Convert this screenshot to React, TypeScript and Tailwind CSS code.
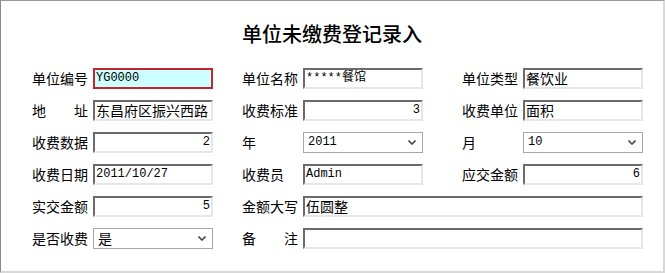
// 单位未缴费登记录入 — 旧式 WinForms 风格录入表单
const CJK = "font-['Noto_Sans_CJK_SC',sans-serif]";
const MONO = "font-['Liberation_Mono','Noto_Sans_CJK_SC',monospace]";

function Label({ text, spread }: { text: string; spread?: boolean }) {
  if (spread) {
    const [a, b] = [...text];
    return (
      <div className={`w-[56px] shrink-0 flex justify-between text-[14px] leading-none text-black ${CJK}`}>
        <span>{a}</span>
        <span>{b}</span>
      </div>
    );
  }
  return (
    <div className={`w-[56px] shrink-0 text-[14px] leading-none text-black whitespace-nowrap ${CJK}`}>
      {text}
    </div>
  );
}

function Box({
  value = "",
  right,
  cjk,
  width = "w-[120px]",
  active,
}: {
  value?: string;
  right?: boolean;
  cjk?: boolean;
  width?: string;
  active?: boolean;
}) {
  const frame = active
    ? "border-2 border-[#c0262e] bg-[#ccffff]"
    : "border-2 border-t-[#6b6b6b] border-l-[#6b6b6b] border-b-[#e6e6e6] border-r-[#e6e6e6] bg-white";
  return (
    <div
      className={`${width} h-[21px] shrink-0 flex items-center px-[1px] overflow-hidden ${frame} ${
        right ? "justify-end" : ""
      }`}
    >
      <span
        className={`whitespace-nowrap text-black ${
          cjk ? `text-[14px] ${CJK}` : `text-[12px] ${MONO}`
        }`}
      >
        {value}
      </span>
    </div>
  );
}

function Combo({ value, cjk }: { value: string; cjk?: boolean }) {
  return (
    <div className="w-[120px] h-[21px] shrink-0 flex items-center justify-between border border-[#a8a8a8] bg-white pl-[4px] pr-[6px]">
      <span className={`whitespace-nowrap text-black ${cjk ? `text-[14px] ${CJK}` : `text-[12px] ${MONO}`}`}>
        {value}
      </span>
      <svg width="8" height="5" viewBox="0 0 8 5" aria-hidden>
        <path d="M0.5 0.5 L4 4 L7.5 0.5" fill="none" stroke="#4a4a4a" strokeWidth="1.6" />
      </svg>
    </div>
  );
}

function Field({ children }: { children: React.ReactNode }) {
  return <div className="flex items-center gap-[5px]">{children}</div>;
}

export default function App() {
  return (
    <div className="w-[665px] h-[273px] bg-white border-l border-t border-l-[#8a8a8a] border-t-[#9a9a9a] border-r-2 border-b-2 border-r-[#d8d8d8] border-b-[#d8d8d8]">
      <h1 className={`pt-[20px] h-[61px] text-center text-[20px] font-medium leading-[26px] text-black ${CJK}`}>
        单位未缴费登记录入
      </h1>
      <div className="grid grid-cols-[210px_220px_181px] auto-rows-[32px] items-center pl-[31px]">
        <Field>
          <Label text="单位编号" />
          <Box value="YG0000" active />
        </Field>
        <Field>
          <Label text="单位名称" />
          <Box value="*****餐馆" />
        </Field>
        <Field>
          <Label text="单位类型" />
          <Box value="餐饮业" cjk />
        </Field>

        <Field>
          <Label text="地址" spread />
          <Box value="东昌府区振兴西路" cjk />
        </Field>
        <Field>
          <Label text="收费标准" />
          <Box value="3" right />
        </Field>
        <Field>
          <Label text="收费单位" />
          <Box value="面积" cjk />
        </Field>

        <Field>
          <Label text="收费数据" />
          <Box value="2" right />
        </Field>
        <Field>
          <Label text="年" />
          <Combo value="2011" />
        </Field>
        <Field>
          <Label text="月" />
          <Combo value="10" />
        </Field>

        <Field>
          <Label text="收费日期" />
          <Box value="2011/10/27" />
        </Field>
        <Field>
          <Label text="收费员" />
          <Box value="Admin" />
        </Field>
        <Field>
          <Label text="应交金额" />
          <Box value="6" right />
        </Field>

        <Field>
          <Label text="实交金额" />
          <Box value="5" right />
        </Field>
        <div className="col-span-2">
          <Field>
            <Label text="金额大写" />
            <Box value="伍圆整" cjk width="w-[340px]" />
          </Field>
        </div>

        <Field>
          <Label text="是否收费" />
          <Combo value="是" cjk />
        </Field>
        <div className="col-span-2">
          <Field>
            <Label text="备注" spread />
            <Box width="w-[340px]" />
          </Field>
        </div>
      </div>
    </div>
  );
}
